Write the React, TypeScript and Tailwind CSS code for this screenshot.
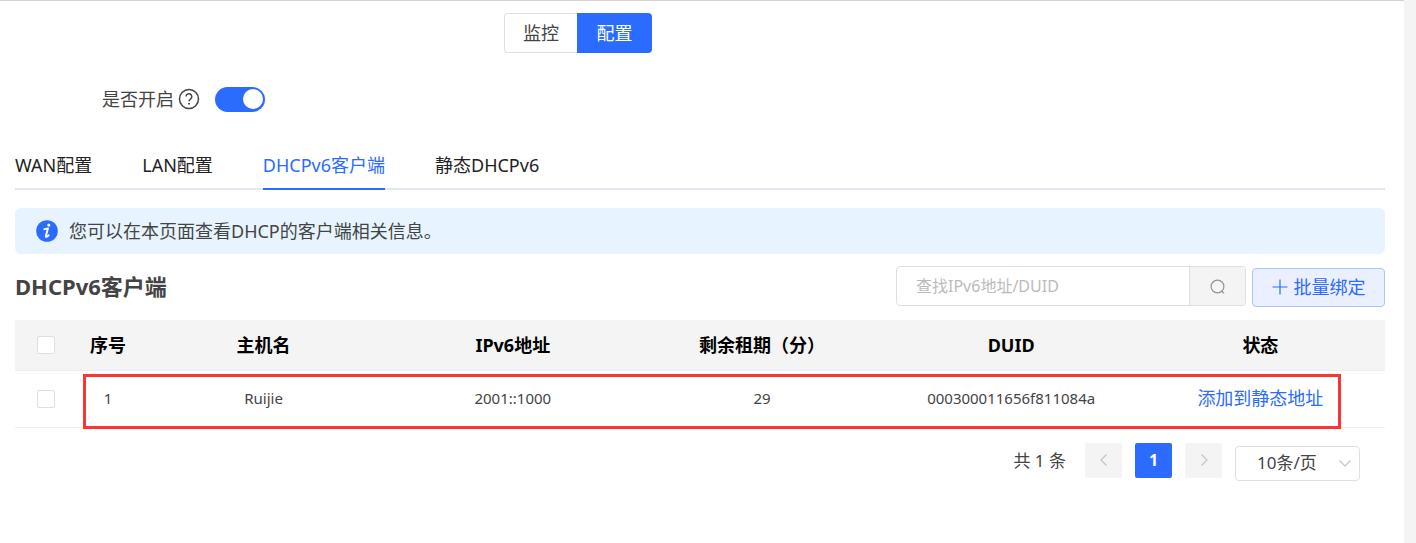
import { useState } from "react";

const TABS = ["WAN配置", "LAN配置", "DHCPv6客户端", "静态DHCPv6"];
const COLUMNS = ["序号", "主机名", "IPv6地址", "剩余租期（分）", "DUID", "状态"];

const CLIENTS = [
  {
    host: "Ruijie",
    ip: "2001::1000",
    lease: 29,
    duid: "000300011656f811084a",
  },
];

const CHECKBOX =
  "block size-[18px] appearance-none rounded-xs border border-[#dcdfe6] bg-white checked:border-[#2b6bff] checked:bg-[#2b6bff]";

function HelpIcon() {
  return (
    <svg viewBox="0 0 22 22" className="size-[22px]" fill="none" stroke="#444" strokeWidth="1.5" aria-hidden="true">
      <circle cx="11" cy="11" r="9.5" />
      <path d="M8 8.600a2.900 2.900 0 1 1 4.700 2.300c-.9.7-1.700 1.200-1.700 2.400" />
      <circle cx="11" cy="15.700" r="1" fill="#444" stroke="none" />
    </svg>
  );
}

function InfoIcon() {
  return (
    <svg viewBox="0 0 22 22" className="size-[22px] shrink-0" aria-hidden="true">
      <circle cx="11" cy="11" r="10.800" fill="#2b6bff" />
      <circle cx="12.800" cy="5.100" r="1.600" fill="#fff" />
      <path
        d="M8.200 9.200c1.400-.1 2.500-.4 3.800-.8l-2.200 7.700c-.2 1.200 1 1 2.900-.8"
        fill="none"
        stroke="#fff"
        strokeWidth="1.900"
        strokeLinecap="round"
        strokeLinejoin="round"
      />
    </svg>
  );
}

function SearchIcon() {
  return (
    <svg viewBox="0 0 16 16" className="size-4" fill="none" stroke="#909399" strokeWidth="1.200" aria-hidden="true">
      <circle cx="7.500" cy="8.500" r="6.400" />
      <path d="m11.500 13 2.500 2.400" />
    </svg>
  );
}

function Chevron({ d }: { d: string }) {
  return (
    <svg viewBox="0 0 14 14" className="size-3.5" fill="none" stroke="#c0c4cc" strokeWidth="1.200" aria-hidden="true">
      <path d={d} />
    </svg>
  );
}

function ClientTable() {
  return (
    <div className="relative mt-3.5">
      <table className="w-full table-fixed border-collapse text-center">
        <colgroup>
          <col className="w-[62px]" />
          <col className="w-[62px]" />
          <col span={5} />
        </colgroup>
        <thead>
          <tr className="h-[50px] border-b border-[#ebeef5] bg-[#f4f4f4] text-[18px] text-black">
            <th className="p-0">
              <input type="checkbox" aria-label="全选" className={`${CHECKBOX} mx-auto`} />
            </th>
            {COLUMNS.map((column) => (
              <th key={column} className="p-0 pt-0.5 font-bold whitespace-nowrap">
                {column}
              </th>
            ))}
          </tr>
        </thead>
        <tbody>
          {CLIENTS.map((client, idx) => (
            <tr key={client.duid} className="h-[57px] border-b border-[#ebeef5] text-[15px]">
              <td className="p-0">
                <input type="checkbox" aria-label={client.host} className={`${CHECKBOX} mx-auto`} />
              </td>
              <td className="p-0">{idx + 1}</td>
              <td className="p-0">{client.host}</td>
              <td className="p-0">{client.ip}</td>
              <td className="p-0">{client.lease}</td>
              <td className="p-0">{client.duid}</td>
              <td className="p-0">
                <a href="#static" className="text-[18px] text-[#2b6bff]">
                  添加到静态地址
                </a>
              </td>
            </tr>
          ))}
        </tbody>
      </table>
      {/* highlight over the client row */}
      <div className="pointer-events-none absolute top-[54px] right-11 -bottom-px left-[68px] border-3 border-[#fa3534]" />
    </div>
  );
}

function Pagination() {
  return (
    <div className="mt-[15px] flex items-start justify-end pr-[25px] text-[17px]">
      <span className="leading-[35px]">共 1 条</span>
      <div className="ml-[19px] flex gap-[13px]">
        <button type="button" aria-label="上一页" disabled className="flex h-[35px] w-[37px] items-center justify-center rounded-xs bg-[#f4f4f4]">
          <Chevron d="M9.500 1.500 4 7l5.500 5.500" />
        </button>
        <button type="button" className="h-[35px] w-[37px] rounded-xs bg-[#2b6bff] text-[16px] font-bold text-white">
          1
        </button>
        <button type="button" aria-label="下一页" disabled className="flex h-[35px] w-[37px] items-center justify-center rounded-xs bg-[#f4f4f4]">
          <Chevron d="M4.500 1.500 10 7l-5.500 5.500" />
        </button>
      </div>
      <div className="relative mt-[3px] ml-[13px]">
        <select aria-label="每页条数" className="h-[35px] w-[125px] appearance-none rounded-sm border border-[#dcdfe6] bg-white pl-[21px]">
          <option>10条/页</option>
          <option>20条/页</option>
          <option>50条/页</option>
        </select>
        <span className="pointer-events-none absolute top-2.5 right-2">
          <Chevron d="M1.500 4.500 7 10l5.500-5.500" />
        </span>
      </div>
    </div>
  );
}

export default function App() {
  const [active, setActive] = useState("DHCPv6客户端");

  return (
    <div className="min-h-screen bg-[#f4f4f4] pr-3 font-['Noto_Sans','Noto_Sans_CJK_SC',sans-serif] text-[#444]">
      <main className="min-h-screen border-t border-[#d4d4d4] bg-white pt-3 pr-[19px] pl-[15px] text-[18px]">
        <div className="flex justify-center pr-[244px]">
          <button type="button" className="h-10 w-[73px] rounded-l-sm border border-r-0 border-[#dcdfe6] bg-white">
            监控
          </button>
          <button type="button" className="h-10 w-[75px] rounded-r-sm bg-[#2b6bff] text-white">
            配置
          </button>
        </div>

        <label className="mt-8 flex h-7 items-center pl-[87px]">
          是否开启
          <span className="ml-1">
            <HelpIcon />
          </span>
          <input type="checkbox" role="switch" defaultChecked className="peer sr-only" />
          <span className="ml-[15px] flex h-[25px] w-[50px] items-center rounded-full bg-[#dcdfe6] px-0.5 peer-checked:justify-end peer-checked:bg-[#2b6bff]">
            <span className="size-5 rounded-full bg-white" />
          </span>
        </label>

        <div role="tablist" className="mt-[31px] flex h-[46px] gap-[50px] border-b-2 border-[#e4e7ed] text-[#222]">
          {TABS.map((tab) => (
            <button
              key={tab}
              type="button"
              role="tab"
              aria-selected={tab === active}
              onClick={() => setActive(tab)}
              className={
                tab === active
                  ? "-mb-0.5 border-b-2 border-[#2b6bff] pb-0.5 text-[#2b6bff]"
                  : "-mb-0.5 border-b-2 border-transparent pb-0.5"
              }
            >
              {tab}
            </button>
          ))}
        </div>

        <div className="mt-[18px] flex h-[46px] items-center gap-[11px] rounded-md bg-[#e7f4ff] pl-[21px]">
          <InfoIcon />
          <p>您可以在本页面查看DHCP的客户端相关信息。</p>
        </div>

        <div className="mt-3 flex h-10 items-center justify-between">
          <h2 className="text-[22px] font-bold">DHCPv6客户端</h2>
          <div className="flex items-center gap-1.5">
            <div className="flex h-10 w-[350px] overflow-hidden rounded-sm border border-[#dcdfe6]">
              <input
                type="text"
                aria-label="查找IPv6地址/DUID"
                placeholder="查找IPv6地址/DUID"
                className="min-w-0 flex-1 pl-[19px] text-[16px] outline-none placeholder:text-[#bbb]"
              />
              <button
                type="button"
                aria-label="查找"
                className="flex w-14 items-center justify-center border-l border-[#dcdfe6] bg-[#f4f4f4]"
              >
                <SearchIcon />
              </button>
            </div>
            <button
              type="button"
              className="mt-0.5 flex h-[39px] w-[133px] items-center justify-center gap-1.5 rounded-sm border border-[#aac4ff] bg-[#eaf0ff] text-[#2b6bff]"
            >
              <svg viewBox="0 0 16 16" className="size-4" stroke="currentColor" strokeWidth="1.200" aria-hidden="true">
                <path d="M8 .5v15M.5 8h15" />
              </svg>
              批量绑定
            </button>
          </div>
        </div>

        <ClientTable />
        <Pagination />
      </main>
    </div>
  );
}
